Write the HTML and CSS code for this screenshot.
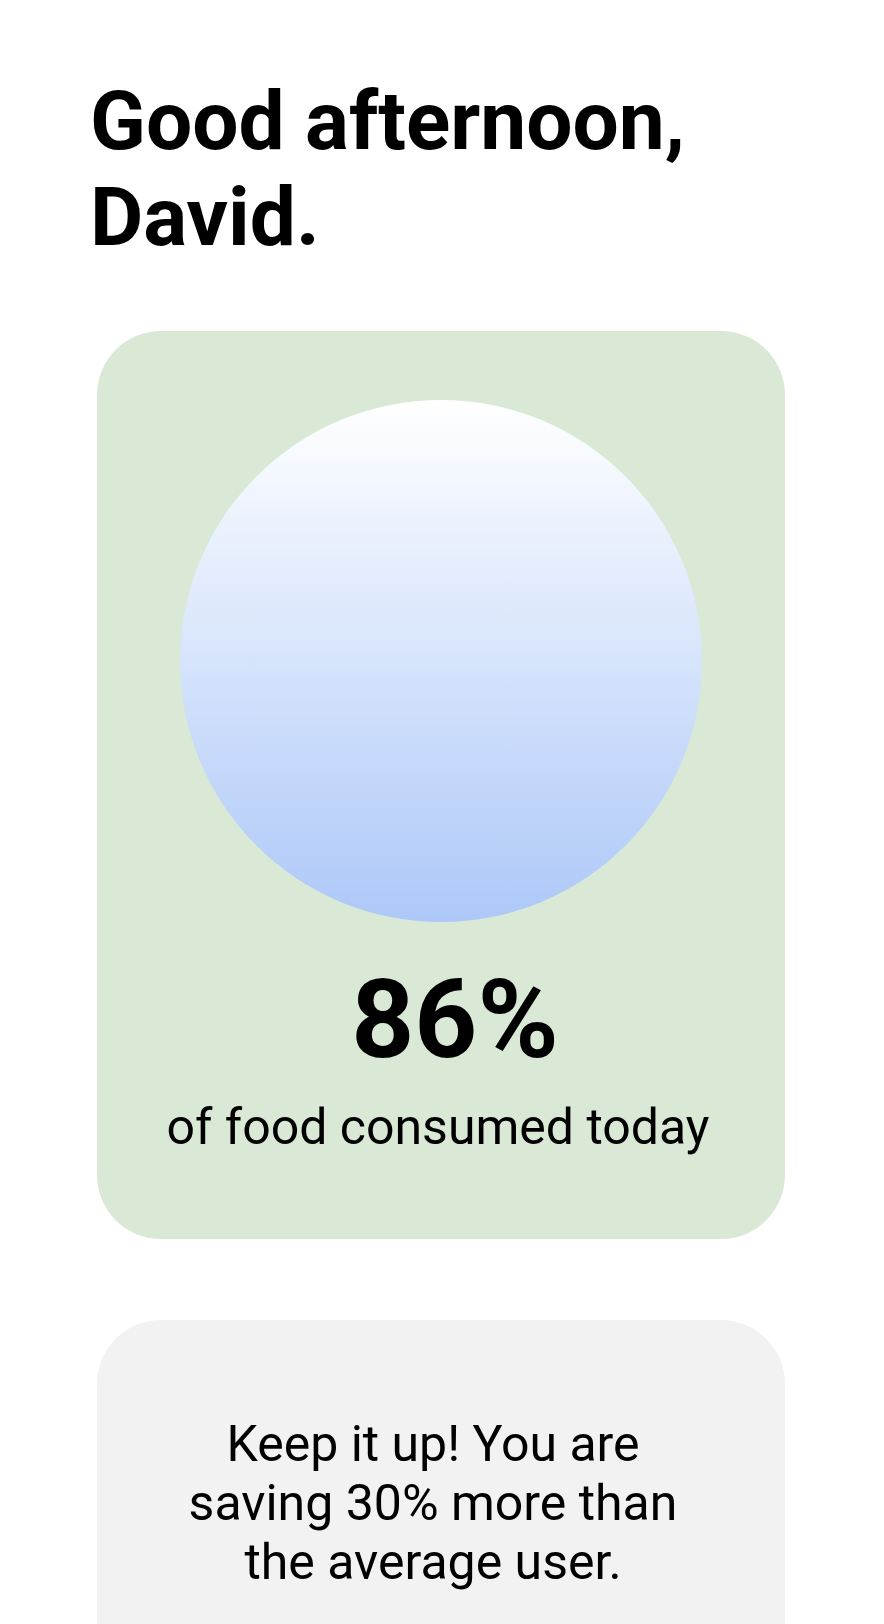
FILE: index.html
```html
<!DOCTYPE html>
<html lang="en">
<head>
<meta charset="utf-8">
<title>Dashboard</title>
<link rel="stylesheet" href="styles.css">
</head>
<body>
<main class="page">
  <h1 class="greeting">Good afternoon,<br>David.</h1>
  <section class="card card-green">
    <div class="orb"></div>
    <div class="percent">86%</div>
    <div class="caption">of food consumed today</div>
  </section>
  <section class="card card-gray">
    <p class="message">Keep it up! You are saving 30% more than the average user.</p>
  </section>
</main>
</body>
</html>
```
FILE: styles.css
```css
html, body {
  margin: 0;
  padding: 0;
  background: #ffffff;
}
body {
  font-family: Roboto, "Liberation Sans", sans-serif;
  color: #000000;
  overflow: hidden;
  height: 1624px;
}
.page {
  display: flex;
  flex-direction: column;
  padding: 73px 0 0 0;
}
.greeting {
  margin: 0 0 66px 90px;
  font-size: 82px;
  line-height: 96px;
  font-weight: 700;
  letter-spacing: 0;
}
.card {
  margin-left: 97px;
  width: 688px;
  border-radius: 64px;
  display: flex;
  flex-direction: column;
  align-items: center;
}
.card-green {
  background: #d9e9d5;
  padding: 69px 0 84px;
}
.orb {
  width: 522px;
  height: 522px;
  border-radius: 50%;
  background: linear-gradient(180deg, #ffffff 0%, #adc8f8 100%);
}
.percent {
  margin-top: 38px;
  font-size: 110px;
  line-height: 120px;
  font-weight: 700;
  padding-left: 28px;
}
.caption {
  margin-top: 19px;
  font-size: 50px;
  line-height: 56px;
  padding-right: 6px;
}
.card-gray {
  margin-top: 81px;
  background: #f2f2f2;
  height: 304px;
  border-radius: 64px 64px 0 0;
  padding-top: 95px;
  box-sizing: border-box;
}
.message {
  margin: 0 16px 0 0;
  width: 520px;
  text-align: center;
  font-size: 50px;
  line-height: 59px;
}
```
